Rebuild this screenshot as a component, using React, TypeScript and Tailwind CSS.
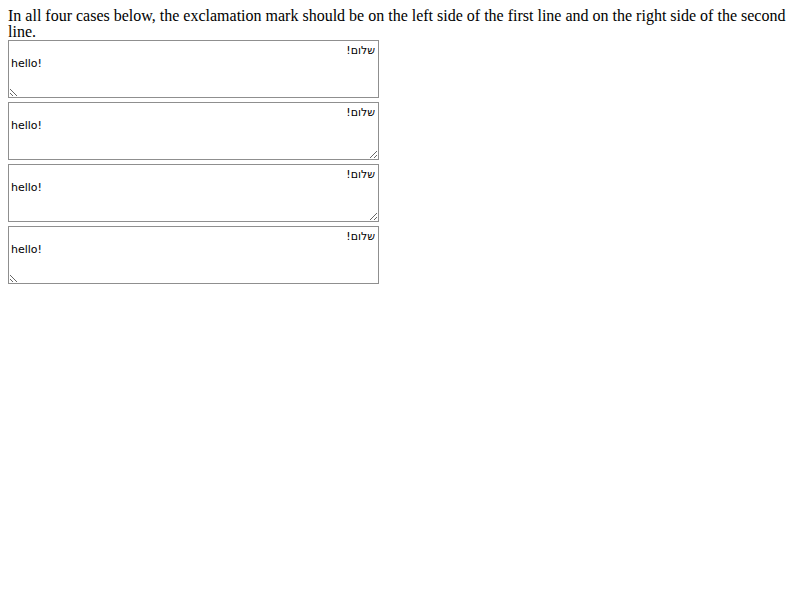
import React from "react";

const value = "שלום!\nhello!";

function Box({ rtl }: { rtl: boolean }) {
  return (
    <textarea
      dir={rtl ? "rtl" : "ltr"}
      defaultValue={value}
      className="block w-[371px] h-[58px] box-border border border-[#8f8f8f] pl-[2px] pr-[3px] pt-[3px] pb-[1px] resize text-[11px] leading-[13px] text-black bg-white [unicode-bidi:plaintext] text-start outline-none font-['DejaVu_Sans',Verdana,sans-serif]"
    />
  );
}

export default function App() {
  return (
    <div className="m-2 text-[16px] leading-[16px] text-black bg-white font-['Liberation_Serif','Times_New_Roman',serif]">
      <p>
        In all four cases below, the exclamation mark should be on the left side of the first line and on the right side of the second line.
      </p>
      <div className="flex flex-col gap-[4px]">
        <Box rtl={true} />
        <Box rtl={false} />
        <Box rtl={false} />
        <Box rtl={true} />
      </div>
    </div>
  );
}
